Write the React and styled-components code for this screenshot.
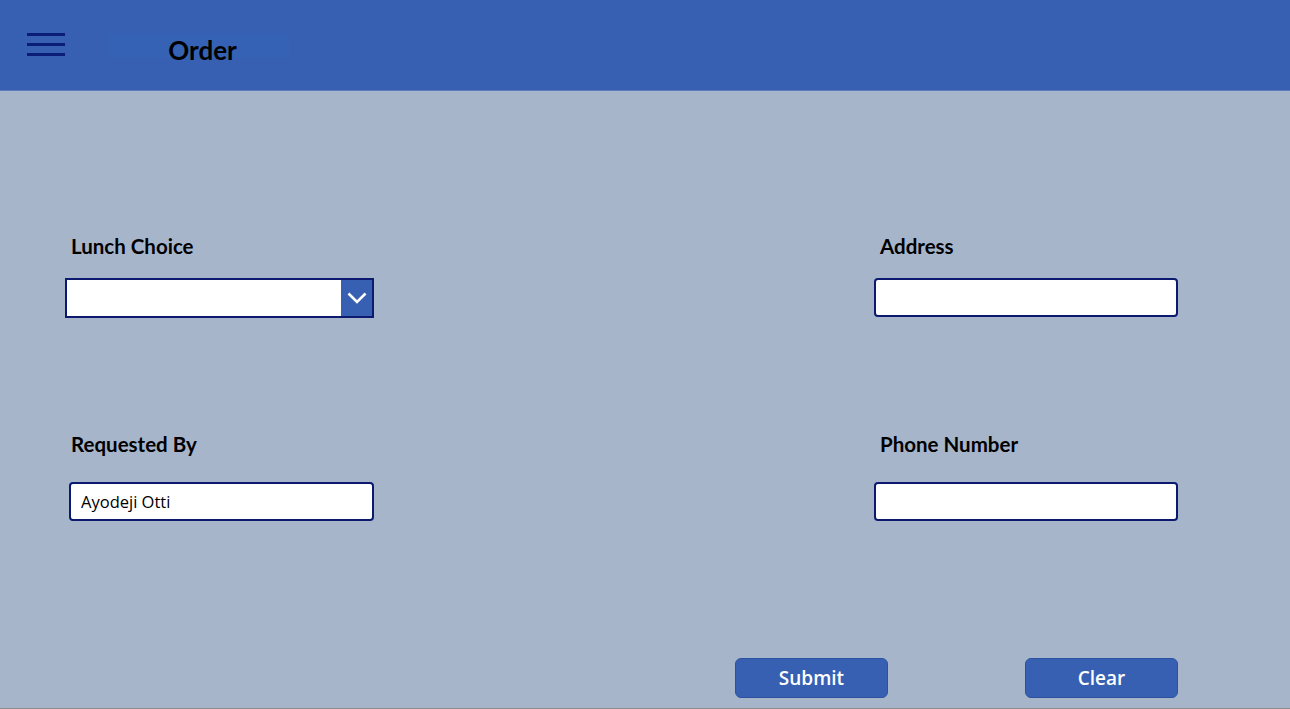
import styled, {createGlobalStyle} from 'styled-components';

const GlobalStyle = createGlobalStyle`
  html, body {
    margin: 0;
    padding: 0;
    background: #a7b5cb;
  }
  * {
    box-sizing: border-box;
  }
`;

const App = () => {
  return (
    <Page>
      <GlobalStyle />
      <Header>
        <MenuButton aria-label='menu'>
          <span />
          <span />
          <span />
        </MenuButton>
        <TitleBox>Order</TitleBox>
      </Header>
      <Main>
        <FormGrid>
          <Field>
            <Label>Lunch Choice</Label>
            <Dropdown>
              <DropdownValue />
              <ChevronBox>
                <svg width='20' height='12' viewBox='0 0 20 12'>
                  <polyline points='1.5,1.5 10,10 18.5,1.5' fill='none' stroke='#fff' strokeWidth='2.6' />
                </svg>
              </ChevronBox>
            </Dropdown>
          </Field>
          <Spacer />
          <Field>
            <Label>Address</Label>
            <TextInput />
          </Field>

          <Field $top={114} $gap={26}>
            <Label>Requested By</Label>
            <TextInput $indent={4} defaultValue='Ayodeji Otti' />
          </Field>
          <Spacer />
          <Field $top={114} $gap={26}>
            <Label>Phone Number</Label>
            <TextInput />
          </Field>
        </FormGrid>
        <ButtonRow>
          <Button>Submit</Button>
          <Button>Clear</Button>
        </ButtonRow>
      </Main>
    </Page>
  );
};

export default App;

const Page = styled.div`
  width: 100%;
  height: 100vh;
  display: flex;
  flex-direction: column;
  background: #a7b5cb;
  border-bottom: 1px solid #8c8c8c;
  overflow: hidden;
`;

const Header = styled.header`
  height: 91px;
  flex-shrink: 0;
  display: flex;
  align-items: center;
  background: #3760b3;
  border-bottom: 1px solid #5b7cbf;
  padding-left: 27px;
`;

const MenuButton = styled.div`
  width: 38px;
  display: flex;
  flex-direction: column;
  gap: 7.5px;
  margin-top: -1px;
  span {
    display: block;
    height: 2.5px;
    background: #0c1d78;
  }
`;

const TitleBox = styled.div`
  width: 183px;
  height: 24px;
  margin-left: 42px;
  margin-top: 2px;
  display: flex;
  align-items: center;
  justify-content: center;
  padding-left: 8px;
  padding-top: 8px;
  background: #3562b4;
  font-family: Lato, 'Liberation Sans', sans-serif;
  font-weight: 700;
  font-size: 26px;
  color: #000;
`;

const Main = styled.main`
  flex: 1;
  display: flex;
  flex-direction: column;
  padding: 143px 112px 0 65px;
`;

const FormGrid = styled.div`
  display: grid;
  grid-template-columns: 309px 1fr 304px;
`;

const Spacer = styled.div``;

const Field = styled.div`
  display: flex;
  flex-direction: column;
  gap: ${props => props.$gap || 20}px;
  margin-top: ${props => props.$top || 0}px;
`;

const Label = styled.label`
  padding-left: 6px;
  line-height: 24px;
  font-family: Lato, 'Liberation Sans', sans-serif;
  font-weight: 700;
  font-size: 20.5px;
  color: #000;
`;

const Dropdown = styled.div`
  height: 40px;
  display: flex;
  border: 2px solid #0b1a6e;
  background: #fff;
`;

const DropdownValue = styled.div`
  flex: 1;
`;

const ChevronBox = styled.div`
  width: 31px;
  display: flex;
  align-items: center;
  justify-content: center;
  background: #3760b3;
`;

const TextInput = styled.input`
  height: 39px;
  margin-left: ${props => props.$indent || 0}px;
  padding: 0 10px;
  border: 2px solid #0b1a6e;
  border-radius: 4px;
  background: #fff;
  font-family: 'Open Sans', 'Liberation Sans', sans-serif;
  font-size: 16.5px;
  color: #000;
  outline: none;
`;

const ButtonRow = styled.div`
  display: flex;
  justify-content: flex-end;
  gap: 137px;
  margin-top: 137px;
`;

const Button = styled.button`
  width: 153px;
  height: 40px;
  border: 1px solid #2c529f;
  border-radius: 6px;
  background: #3760b3;
  font-family: 'Open Sans', 'Liberation Sans', sans-serif;
  font-weight: 600;
  font-size: 19px;
  color: #fff;
  cursor: pointer;
`;
